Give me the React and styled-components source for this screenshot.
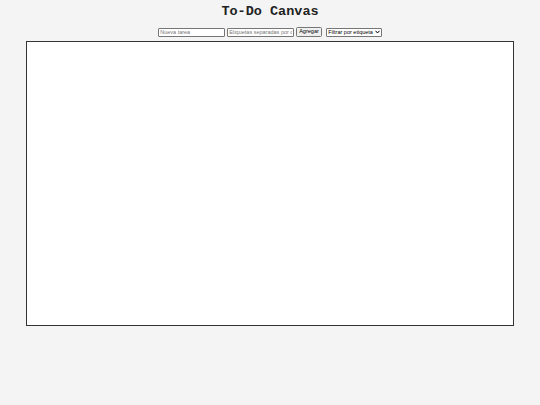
import React from "react";
import styled, { createGlobalStyle } from "styled-components";

const Global = createGlobalStyle`
  html, body { margin: 0; padding: 0; background: #f4f4f4; }
  body { font-family: "Liberation Sans", Arial, sans-serif; }
`;

const Page = styled.div`
  display: flex;
  flex-direction: column;
  align-items: center;
  padding-top: 4px;
`;

const Title = styled.h1`
  margin: 0;
  font-family: "Liberation Mono", "Courier New", monospace;
  font-weight: bold;
  font-size: 13.5px;
  line-height: 16px;
  color: #222;
`;

const Controls = styled.div`
  display: flex;
  align-items: center;
  gap: 2px;
  margin-top: 7px;
  height: 10px;
`;

const Input = styled.input`
  box-sizing: border-box;
  width: 67px;
  height: 9px;
  padding: 0 1px;
  font-family: "Liberation Sans", Arial, sans-serif;
  font-size: 5.5px;
  border: 0.75px solid #767676;
  border-radius: 1px;
  background: #fff;
  &::placeholder { color: #777; }
`;

const Button = styled.button`
  box-sizing: border-box;
  height: 9.5px;
  padding: 0 2px;
  font-family: "Liberation Sans", Arial, sans-serif;
  font-size: 5.5px;
  color: #000;
  background: #efefef;
  border: 0.75px solid #767676;
  border-radius: 1.5px;
  line-height: 1;
`;

const SelectBox = styled.label`
  box-sizing: border-box;
  display: flex;
  align-items: center;
  gap: 1px;
  height: 9px;
  width: 56px;
  margin-left: 2px;
  padding: 0 1px 0 1.5px;
  background: #fff;
  border: 0.75px solid #767676;
  border-radius: 1px;
`;

const Select = styled.select`
  appearance: none;
  flex: 1;
  min-width: 0;
  height: 100%;
  margin: 0;
  padding: 0;
  border: none;
  outline: none;
  background: transparent;
  font-family: "Liberation Sans", Arial, sans-serif;
  font-size: 5.5px;
  color: #000;
`;

const Canvas = styled.div`
  box-sizing: border-box;
  margin-top: 4px;
  width: 488px;
  height: 285px;
  background: #fff;
  border: 1px solid #333;
`;

export default function App() {
  return (
    <>
      <Global />
      <Page>
        <Title>To-Do Canvas</Title>
        <Controls>
          <Input placeholder="Nueva tarea" />
          <Input placeholder="Etiquetas separadas por comas" />
          <Button>Agregar</Button>
          <SelectBox>
            <Select defaultValue="">
              <option value="">Filtrar por etiqueta</option>
            </Select>
            <svg width="5" height="4" viewBox="0 0 10 8">
              <path d="M1 1.5 L5 6 L9 1.5" fill="none" stroke="#000" strokeWidth="2" />
            </svg>
          </SelectBox>
        </Controls>
        <Canvas />
      </Page>
    </>
  );
}
